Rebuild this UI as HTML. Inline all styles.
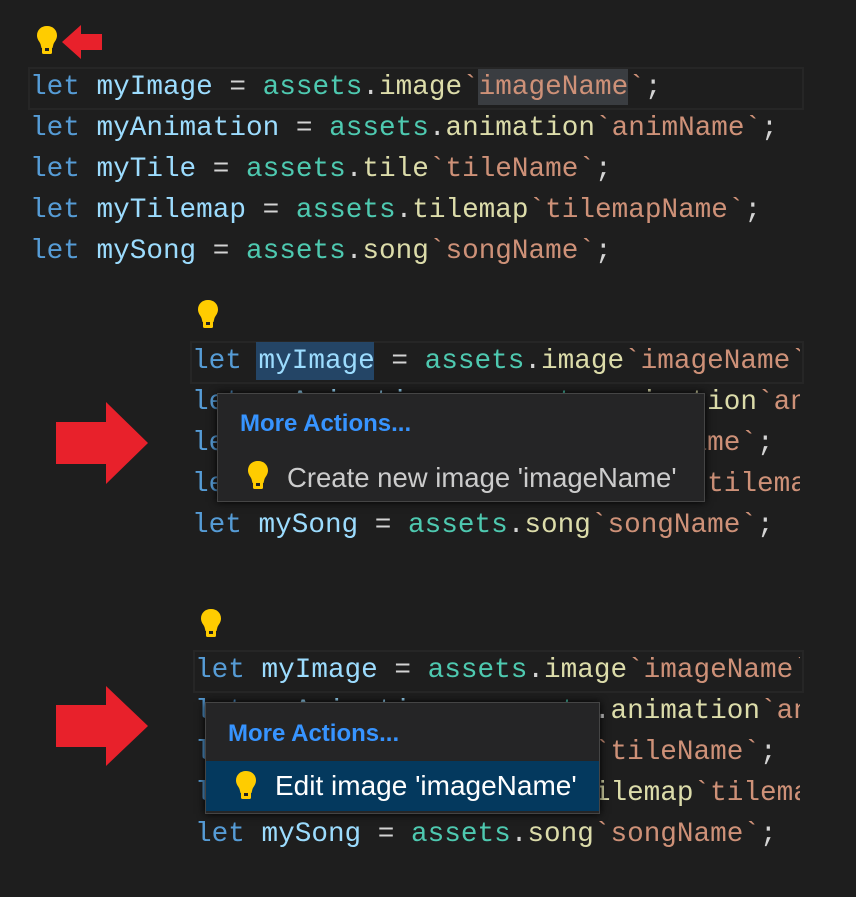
<!DOCTYPE html>
<html><head><style>
body{margin:0;background:#1e1e1e;width:856px;height:897px;overflow:hidden;position:relative;font-family:"Liberation Mono",monospace}
.code{position:absolute;font-size:27.7px;line-height:41px;white-space:pre;color:#d4d4d4;overflow:hidden}
.k{color:#569cd6}.v{color:#9cdcfe}.c{color:#4ec9b0}.f{color:#dcdcaa}.s{color:#ce9178}
.pop{position:absolute;background:#252526;border:1px solid #454545;font-family:"Liberation Sans",sans-serif;box-shadow:0 0 8px #000}
.ma{color:#3794ff;font-size:24px;font-weight:bold;position:absolute;left:22px}
.it{color:#cccccc;font-size:27.5px;position:absolute;left:0;right:0;height:50px;line-height:50px;padding-left:69px}
svg{position:absolute}
</style></head><body>
<svg width="0" height="0"><defs><g id="bulb"><path d="M10 0C4 0 0 4 0 9.5c0 4 2.5 6 3.5 8.5L4.5 22h11l1-4c1-2.5 3.5-4.5 3.5-8.5C20 4 16 0 10 0z" fill="#ffcc00"/><rect x="5" y="20" width="10" height="8" rx="1.5" fill="#ffcc00"/><rect x="8" y="22" width="4" height="3" fill="#222"/></g></defs></svg>
<svg style="left:37px;top:26px" width="22" height="30"><use href="#bulb"/></svg>
<svg style="left:62px;top:25px" width="42" height="36"><polygon points="0,17 19,0 19,9 40,9 40,25 19,25 19,34" fill="#e8212b"/></svg>
<div style="position:absolute;left:28px;top:67px;width:772px;height:39px;border:2px solid #262626"></div>
<div style="position:absolute;left:478px;top:69px;width:150px;height:36px;background:#3a3d41"></div>
<div class="code" style="left:30px;top:67px;width:800px"><span class="k">let</span> <span class="v">myImage</span> = <span class="c">assets</span>.<span class="f">image</span><span class="s">`imageName`</span>;
<span class="k">let</span> <span class="v">myAnimation</span> = <span class="c">assets</span>.<span class="f">animation</span><span class="s">`animName`</span>;
<span class="k">let</span> <span class="v">myTile</span> = <span class="c">assets</span>.<span class="f">tile</span><span class="s">`tileName`</span>;
<span class="k">let</span> <span class="v">myTilemap</span> = <span class="c">assets</span>.<span class="f">tilemap</span><span class="s">`tilemapName`</span>;
<span class="k">let</span> <span class="v">mySong</span> = <span class="c">assets</span>.<span class="f">song</span><span class="s">`songName`</span>;</div>

<svg style="left:198px;top:300px" width="22" height="30"><use href="#bulb"/></svg>
<div style="position:absolute;left:190px;top:341px;width:610px;height:39px;border:2px solid #262626"></div>
<div style="position:absolute;left:256px;top:342px;width:118px;height:38px;background:#264f78;opacity:.8"></div>
<div class="code" style="left:192px;top:341px;width:608px"><span class="k">let</span> <span class="v">myImage</span> = <span class="c">assets</span>.<span class="f">image</span><span class="s">`imageName`</span>;
<span class="k">let</span> <span class="v">myAnimation</span> = <span class="c">assets</span>.<span class="f">animation</span><span class="s">`animName`</span>;
<span class="k">let</span> <span class="v">myTile</span> = <span class="c">assets</span>.<span class="f">tile</span><span class="s">`tileName`</span>;
<span class="k">let</span> <span class="v">myTilemap</span> = <span class="c">assets</span>.<span class="f">tilemap</span><span class="s">`tilemapName`</span>;
<span class="k">let</span> <span class="v">mySong</span> = <span class="c">assets</span>.<span class="f">song</span><span class="s">`songName`</span>;</div>
<svg style="left:56px;top:402px" width="94" height="84"><polygon points="0,20 50,20 50,0 92,41 50,82 50,62 0,62" fill="#e8212b"/></svg>
<div class="pop" style="left:217px;top:393px;width:486px;height:107px">
<div class="ma" style="top:16px">More Actions...</div>
<div class="it" style="top:59px">Create new image 'imageName'</div>
<svg style="left:30px;top:67px" width="22" height="30"><use href="#bulb"/></svg>
</div>

<svg style="left:201px;top:609px" width="22" height="30"><use href="#bulb"/></svg>
<div style="position:absolute;left:193px;top:650px;width:607px;height:39px;border:2px solid #262626"></div>
<div class="code" style="left:195px;top:650px;width:605px"><span class="k">let</span> <span class="v">myImage</span> = <span class="c">assets</span>.<span class="f">image</span><span class="s">`imageName`</span>;
<span class="k">let</span> <span class="v">myAnimation</span> = <span class="c">assets</span>.<span class="f">animation</span><span class="s">`animName`</span>;
<span class="k">let</span> <span class="v">myTile</span> = <span class="c">assets</span>.<span class="f">tile</span><span class="s">`tileName`</span>;
<span class="k">let</span> <span class="v">myTilemap</span> = <span class="c">assets</span>.<span class="f">tilemap</span><span class="s">`tilemapName`</span>;
<span class="k">let</span> <span class="v">mySong</span> = <span class="c">assets</span>.<span class="f">song</span><span class="s">`songName`</span>;</div>
<svg style="left:56px;top:686px" width="94" height="82"><polygon points="0,19 50,19 50,0 92,40 50,80 50,61 0,61" fill="#e8212b"/></svg>
<div class="pop" style="left:205px;top:702px;width:393px;height:110px">
<div class="ma" style="top:17px">More Actions...</div>
<div class="it" style="top:58px;background:#04395e;color:#fff;padding-left:69px;font-size:28px">Edit image 'imageName'</div>
<svg style="left:30px;top:68px" width="22" height="30"><use href="#bulb"/></svg>
</div>
</body></html>
